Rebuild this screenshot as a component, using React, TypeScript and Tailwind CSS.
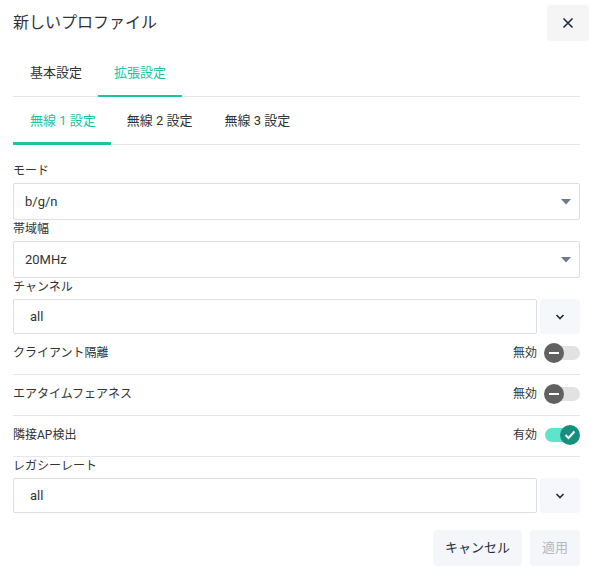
import React from "react";

const font = { fontFamily: "Roboto, 'Noto Sans CJK JP', sans-serif" };

function Caret() {
  return (
    <svg width="10" height="6" viewBox="0 0 10 6" className="mr-[8px]">
      <path d="M0 0 L10 0 L5 5.5 Z" fill="#6b7a8f" />
    </svg>
  );
}

function Chevron() {
  return (
    <svg width="10" height="6" viewBox="0 0 10 6">
      <path d="M1.5 1 L5 4.5 L8.5 1" fill="none" stroke="#1f2d3d" strokeWidth="1.6" />
    </svg>
  );
}

function Select({ value }: { value: string }) {
  return (
    <div className="mt-[3px] flex h-[37px] items-center justify-between rounded-[2px] border border-[#dcdfe6] pl-[11px] text-[13px] text-[#333]">
      <span>{value}</span>
      <Caret />
    </div>
  );
}

function InputChevron({ value }: { value: string }) {
  return (
    <div className="mt-[3px] flex h-[35px] gap-[3px]">
      <div className="flex flex-1 items-center rounded-[2px] border border-[#dcdfe6] pl-[16px] text-[13px] text-[#333]">
        {value}
      </div>
      <div className="flex w-[40px] items-center justify-center rounded-[4px] bg-[#f5f7fa]">
        <Chevron />
      </div>
    </div>
  );
}

function Toggle({ on }: { on: boolean }) {
  if (on) {
    return (
      <div className="relative h-[20px] w-[36px]">
        <div className="absolute left-[1px] top-[3px] h-[14px] w-[30px] rounded-full bg-[#5de4cb]" />
        <div className="absolute right-0 top-0 flex h-[20px] w-[20px] items-center justify-center rounded-full bg-[#178f7f]">
          <svg width="12" height="10" viewBox="0 0 12 10">
            <path d="M1.5 5 L4.5 8 L10.5 1.5" fill="none" stroke="#fff" strokeWidth="2" />
          </svg>
        </div>
      </div>
    );
  }
  return (
    <div className="relative h-[20px] w-[36px]">
      <div className="absolute right-0 top-[3px] h-[14px] w-[30px] rounded-full bg-[#e2e2e2]" />
      <div className="absolute left-0 top-0 flex h-[20px] w-[20px] items-center justify-center rounded-full bg-[#616161]">
        <div className="h-[2px] w-[10px] bg-white" />
      </div>
    </div>
  );
}

function ToggleRow({ label, on }: { label: string; on: boolean }) {
  return (
    <div className="flex h-[41px] items-center justify-between border-b border-[#e4e7ed] pb-[2px]">
      <span className="text-[12px] text-[#333]">{label}</span>
      <div className="flex items-center gap-[7px]">
        <span className="text-[12px] text-[#333]">{on ? "有効" : "無効"}</span>
        <Toggle on={on} />
      </div>
    </div>
  );
}

export default function App() {
  return (
    <div className="h-[579px] w-[594px] bg-white pl-[13px] pr-[14px]" style={font}>
      <div className="flex h-[46px] items-center justify-between">
        <span className="text-[16px] text-[#333]">新しいプロファイル</span>
        <button className="-mr-[9px] flex h-[36px] w-[42px] items-center justify-center rounded-[4px] bg-[#f5f5f5]">
          <svg width="12" height="12" viewBox="0 0 12 12">
            <path d="M1.5 1.5 L10.5 10.5 M10.5 1.5 L1.5 10.5" stroke="#1f2d3d" strokeWidth="1.6" />
          </svg>
        </button>
      </div>

      <div className="flex border-b border-[#e4e7ed] pl-[1px]">
        <div className="-mb-px border-b-2 border-transparent px-[16px] pb-[12px] pt-[17px] text-[13px] leading-[20px] text-[#333]">
          基本設定
        </div>
        <div className="-mb-px border-b-2 border-[#1bc5a4] px-[16px] pb-[12px] pt-[17px] text-[13px] leading-[20px] text-[#1bc5a4]">
          拡張設定
        </div>
      </div>

      <div className="flex border-b border-[#e4e7ed]">
        <div className="-mb-px border-b-[3px] border-[#1bc5a4] pl-[17px] pr-[15px] pb-[11px] pt-[14px] text-[13px] leading-[20px] text-[#1bc5a4]">
          無線 1 設定
        </div>
        <div className="-mb-px border-b-[3px] border-transparent px-[16px] pb-[11px] pt-[14px] text-[13px] leading-[20px] text-[#333]">
          無線 2 設定
        </div>
        <div className="-mb-px border-b-[3px] border-transparent px-[16px] pb-[11px] pt-[14px] text-[13px] leading-[20px] text-[#333]">
          無線 3 設定
        </div>
      </div>

      <div className="pt-[17px]">
        <div className="text-[12px] leading-[18px] text-[#333]">モード</div>
        <Select value="b/g/n" />
        <div className="text-[12px] leading-[18px] text-[#333]">帯域幅</div>
        <Select value="20MHz" />
        <div className="text-[12px] leading-[18px] text-[#333]">チャンネル</div>
        <InputChevron value="all" />
        <ToggleRow label="クライアント隔離" on={false} />
        <ToggleRow label="エアタイムフェアネス" on={false} />
        <ToggleRow label="隣接AP検出" on={true} />
        <div className="text-[12px] leading-[18px] text-[#333]">レガシーレート</div>
        <InputChevron value="all" />
        <div className="mt-[17px] flex justify-end gap-[8px]">
          <button className="h-[36px] rounded-[4px] bg-[#f4f6f9] px-[12px] text-[13px] text-[#1f2d3d]">キャンセル</button>
          <button className="h-[36px] rounded-[4px] bg-[#f4f6f9] px-[12px] text-[13px] text-[#b4b8bf]">適用</button>
        </div>
      </div>
    </div>
  );
}
